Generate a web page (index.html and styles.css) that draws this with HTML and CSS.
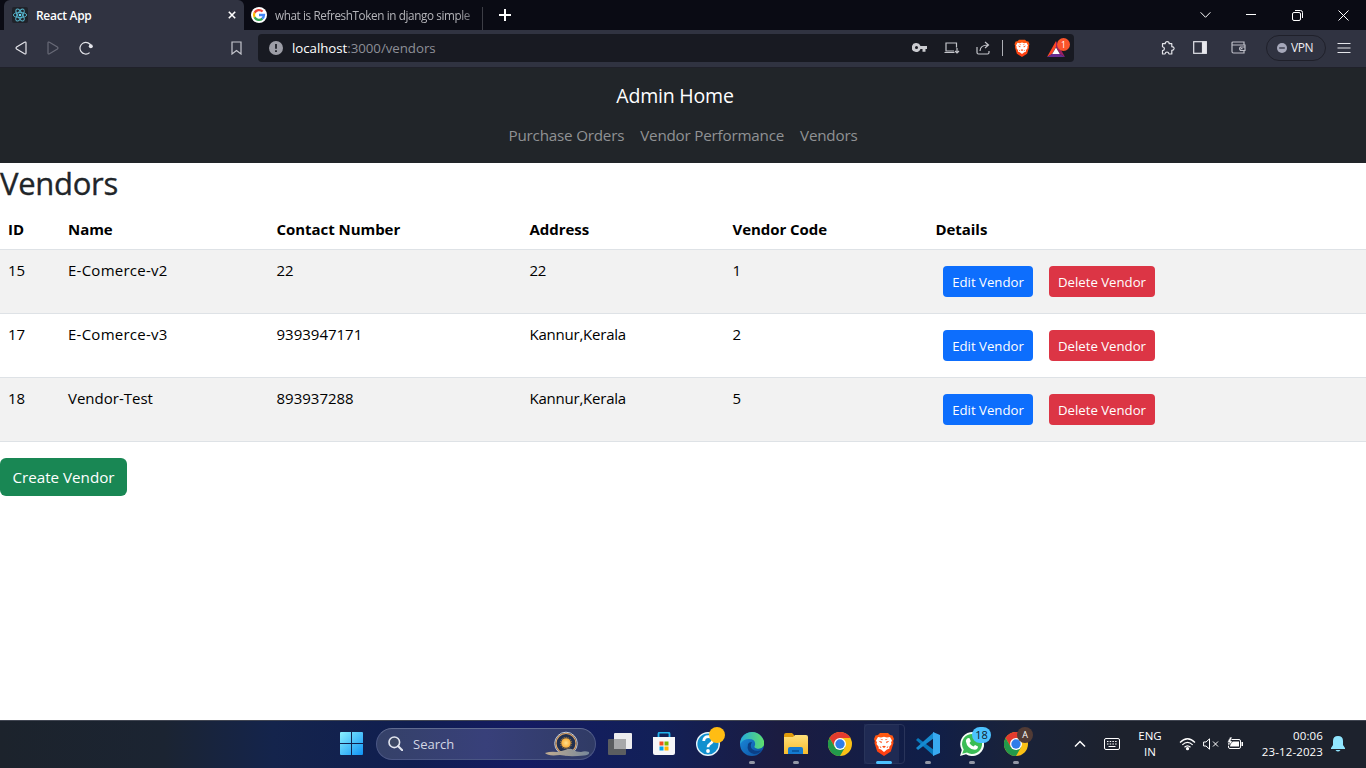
FILE: index.html
```html
<!DOCTYPE html>
<html lang="en">
<head>
<meta charset="utf-8">
<title>React App</title>
<link rel="stylesheet" href="styles.css">
</head>
<body>
<svg class="defs" width="0" height="0">
  <defs>
    <linearGradient id="win" x1="0" y1="0" x2="1" y2="1"><stop offset="0" stop-color="#8af0ff"/><stop offset="1" stop-color="#0f93f5"/></linearGradient>
    <linearGradient id="edgeA" x1="0" y1="0" x2="1" y2="0"><stop offset="0" stop-color="#25a9dc"/><stop offset="1" stop-color="#5fe06a"/></linearGradient>
    <linearGradient id="edgeB" x1="0" y1="0" x2="1" y2="1"><stop offset="0" stop-color="#1b8fe0"/><stop offset="1" stop-color="#0c4c9c"/></linearGradient>
    <linearGradient id="folder" x1="0" y1="0" x2="0" y2="1"><stop offset="0" stop-color="#ffe07a"/><stop offset="1" stop-color="#f8bc2c"/></linearGradient>
    <linearGradient id="lion" x1="0" y1="0" x2="0" y2="1"><stop offset="0" stop-color="#ff5a10"/><stop offset="1" stop-color="#ff3c12"/></linearGradient>
    <linearGradient id="sand" x1="0" y1="0" x2="1" y2="0"><stop offset="0" stop-color="#c2ad91"/><stop offset="1" stop-color="#77889a"/></linearGradient>
    <radialGradient id="glow"><stop offset="0" stop-color="#ffe08a"/><stop offset="1" stop-color="#f9ac35"/></radialGradient>
    <symbol id="brave" viewBox="0 0 20 24">
      <path fill="url(#lion)" d="M6 1h8l2 2 2.500.4L20 7l-.8 2 .3 2-2.700 8.500L10 24l-6.800-4.500L.5 11l.3-2L0 7l1.500-3.600L4 3z"/>
      <path fill="#fff" d="M4 5l3 .5 3-.8 3 .8 3-.5 2 3.500-1 2 .5 1.500-2.300 3 .3 1.500-2.500 1-3 2.500-3-2.500-2.500-1 .3-1.500-2.300-3L3 10.500 2 8.500z"/>
      <path fill="#ff4a10" d="M4.500 8.800l3.500.9-.6 1.500zM15.500 8.800l-3.500.9.600 1.500zM8 14.600l2-.9 2 .9-2 1.300zM6 6.800l3 .7-.8.8zM14 6.800l-3 .7.8.8zM5.500 14l2 1.300-1 .8zM14.500 14l-2 1.300 1 .8z"/>
    </symbol>
    <symbol id="chrome" viewBox="0 0 24 24">
      <circle cx="12" cy="12" r="12" fill="#fbc116"/>
      <path fill="#e33b2e" d="M1.600 6A12 12 0 0 1 22.400 6H12L6.800 15z"/>
      <path fill="#229a4b" d="M1.600 6A12 12 0 0 0 12 24l5.200-9H6.800z"/>
      <circle cx="12" cy="12" r="6" fill="#fff"/><circle cx="12" cy="12" r="4.700" fill="#2f7de9"/>
    </symbol>
  </defs>
</svg>

<header class="tabs">
  <div class="tab tab-active">
    <svg class="react" width="16" height="16" viewBox="0 0 16 16"><rect width="16" height="16" rx="2" fill="#20232a"/><g fill="none" stroke="#58b8d0" stroke-width=".9"><ellipse cx="8" cy="8" rx="6.700" ry="2.600"/><ellipse cx="8" cy="8" rx="6.700" ry="2.600" transform="rotate(60 8 8)"/><ellipse cx="8" cy="8" rx="6.700" ry="2.600" transform="rotate(120 8 8)"/></g><circle cx="8" cy="8" r="1.300" fill="#61dafb"/></svg>
    <span class="tab-title">React App</span>
    <svg width="8" height="8" viewBox="0 0 8 8"><path d="M.8.8l6.400 6.400M7.200.8L.8 7.200" stroke="#fff" stroke-width="1.600"/></svg>
  </div>
  <div class="tab tab-idle">
    <svg width="16" height="16" viewBox="0 0 16 16"><circle cx="8" cy="8" r="8" fill="#fff"/><g fill="none" stroke-width="2.300"><path stroke="#ea4335" d="M3.600 5.800A5 5 0 0 1 11.600 4.500"/><path stroke="#fbbc05" d="M3.700 10.400A5 5 0 0 1 3.600 5.600"/><path stroke="#34a853" d="M11.400 11.600A5 5 0 0 1 3.600 10.200"/><path stroke="#4285f4" d="M8 8h5A5 5 0 0 1 11.200 11.700"/></g></svg>
    <span class="tab-title">what is RefreshToken in django simple</span>
  </div>
  <svg class="newtab" width="12" height="12" viewBox="0 0 12 12"><path d="M6 0v12M0 6h12" stroke="#fff" stroke-width="2"/></svg>
  <div class="window-controls">
    <span><svg width="11" height="8" viewBox="0 0 11 8"><path d="M.6 1.300l4.900 5 4.900-5"/></svg></span>
    <span><svg width="10" height="10" viewBox="0 0 10 10"><path d="M0 4.500h10"/></svg></span>
    <span><svg width="11" height="11" viewBox="0 0 11 11"><rect x=".5" y="2.500" width="8" height="8" rx="1.500"/><path d="M3 .5h5.500a2 2 0 0 1 2 2V8"/></svg></span>
    <span><svg width="11" height="11" viewBox="0 0 11 11"><path d="M.5.5l10 10M10.500.5l-10 10"/></svg></span>
  </div>
</header>

<div class="toolbar">
  <div class="nav-icons">
    <svg width="12" height="14" viewBox="0 0 12 14"><path d="M9.500 1.200Q11 .6 11 2v10q0 1.400-1.500.8L1.600 8Q.5 7 1.600 6z"/></svg>
    <svg class="dim" width="12" height="14" viewBox="0 0 12 14"><path d="M2.500 1.200Q1 .6 1 2v10q0 1.400 1.500.8L10.400 8Q11.500 7 10.400 6z"/></svg>
    <svg width="14" height="14" viewBox="0 0 14 14"><path d="M10.600 11.600A5.800 5.800 0 1 1 12.300 5.400"/><circle class="solid" cx="11.800" cy="5.200" r="2" fill="#e4e5ea"/></svg>
  </div>
  <svg class="bookmark" width="11" height="14" viewBox="0 0 11 14"><path d="M1 1h9v12l-4.500-3.500L1 13z"/></svg>
  <div class="address">
    <svg class="info" width="14" height="14" viewBox="0 0 14 14"><circle class="solid" cx="7" cy="7" r="7" fill="#9c9da6"/><path d="M7 3v4.700M7 9.200V11" stroke="#181a22" stroke-width="1.700"/></svg>
    <span class="url"><b>localhost</b>:3000/vendors</span>
    <svg class="key" width="15" height="9" viewBox="0 0 15 9"><path fill="#cacbd0" fill-rule="evenodd" d="M4.500 0a4.500 4.500 0 1 0 4 6H10.500v2.700h3V6H15V3H8.500A4.500 4.500 0 0 0 4.500 0zm0 3a1.500 1.500 0 1 1 0 3 1.500 1.500 0 0 1 0-3z"/></svg>
    <svg class="install" width="16" height="12" viewBox="0 0 16 12"><path d="M12.500 5.500V1H2v8h8M.5 10.500h10M13 6v5M11 9l2 2 2-2"/></svg>
    <svg class="share" width="14" height="14" viewBox="0 0 14 14"><path d="M1 6v5.500Q1 13 2.500 13h9q1.500 0 1.500-1.500V10M4 10q.2-6 8-6M9 1l3.500 3L9 7"/></svg>
    <i class="bar"></i>
    <svg class="shield" width="16" height="18"><use href="#brave"/></svg>
    <div class="rewards"><svg width="18" height="16" viewBox="0 0 18 16"><path fill="#ff4724" d="M9 0L0 16l5-3 4-7z"/><path fill="#9e1f63" d="M9 0l9 16-5-3-4-7z"/><path fill="#662d91" d="M0 16h18l-5-3H5z"/><path fill="#fff" d="M9 6.500l3.800 6.500H5.200z"/></svg><em>1</em></div>
  </div>
  <svg class="puzzle" width="15" height="14" viewBox="0 0 15 14"><path d="M2.500 2.700h2.700a2 2 0 0 1 4 0h2.600v3q2.700.2 2.200 2.200-.5 1.600-2.200 1.500V13H9q-.4-2-2-2t-2 2H2.500V9.700q1.900-.4 1.900-2t-1.900-2z" stroke-linejoin="round"/></svg>
  <svg class="side" width="14" height="13" viewBox="0 0 14 13"><rect x=".7" y=".7" width="12.600" height="11.600"/><path fill="#e9e9ee" d="M9.500 1h3.500v11H9.500z"/></svg>
  <svg class="wallet" width="15" height="13" viewBox="0 0 15 13"><path d="M13 4V1H2Q1 1 1 2v8.500Q1 12 2.500 12H13V9.500M1 4h13v5.500H9.500a2.500 2.500 0 0 1 0-3.500H14M10 7.700h1.500"/></svg>
  <div class="vpn"><svg width="10" height="10" viewBox="0 0 10 10"><circle class="solid" cx="5" cy="5" r="5" fill="#a6a8ba"/><path d="M2.200 5h5.600" stroke="#303342" stroke-width="1.300"/></svg><span>VPN</span></div>
  <svg class="menu" width="14" height="12" viewBox="0 0 14 12"><path d="M.5 1.500h13M.5 6h13M.5 10.500h13"/></svg>
</div>

<nav class="navbar">
  <a class="brand">Admin Home</a>
  <div class="links"><a>Purchase Orders</a><a>Vendor Performance</a><a>Vendors</a></div>
</nav>

<main>
  <h2>Vendors</h2>
  <table>
    <colgroup><col class="c-id"><col class="c-name"><col class="c-contact"><col class="c-address"><col class="c-code"><col></colgroup>
    <thead><tr><th>ID</th><th>Name</th><th>Contact Number</th><th>Address</th><th>Vendor Code</th><th>Details</th></tr></thead>
    <tbody>
      <tr><td>15</td><td class="name">E-Comerce-v2</td><td>22</td><td class="place">22</td><td>1</td><td><div class="actions"><button class="edit">Edit Vendor</button><button class="delete">Delete Vendor</button></div></td></tr>
      <tr><td>17</td><td class="name">E-Comerce-v3</td><td>9393947171</td><td class="place">Kannur,Kerala</td><td>2</td><td><div class="actions"><button class="edit">Edit Vendor</button><button class="delete">Delete Vendor</button></div></td></tr>
      <tr><td>18</td><td>Vendor-Test</td><td>893937288</td><td class="place">Kannur,Kerala</td><td>5</td><td><div class="actions"><button class="edit">Edit Vendor</button><button class="delete">Delete Vendor</button></div></td></tr>
    </tbody>
  </table>
  <button class="create">Create Vendor</button>
</main>

<footer class="taskbar">
  <svg class="start" width="23" height="23" viewBox="0 0 23 23"><path fill="url(#win)" d="M1 0h10v11H0V1q0-1 1-1zM12 0h10q1 0 1 1v10H12zM0 12h11v11H1q-1 0-1-1zM12 12h11v10q0 1-1 1H12z"/></svg>
  <div class="search">
    <svg width="15" height="15" viewBox="0 0 15 15"><circle cx="6.300" cy="6.300" r="5.300" fill="#3d4864" stroke="#e3e6ef" stroke-width="1.600"/><path d="M10.200 10.200l4 4" stroke="#e3e6ef" stroke-width="2" stroke-linecap="round"/></svg>
    <span>Search</span>
    <svg class="sun" width="44" height="26" viewBox="0 0 44 26"><circle cx="21" cy="12.500" r="11.300" fill="#213050" stroke="#c6d0dd"/><circle cx="21" cy="12.500" r="10" fill="none" stroke="#e0a566" stroke-width="1.200"/><circle cx="21" cy="12" r="5.600" fill="none" stroke="#c48a32" stroke-dasharray="1 1"/><circle cx="21" cy="12" r="4.800" fill="url(#glow)"/><path fill="url(#sand)" d="M0 22q6-2 12-1 5-1 8-2 5-2 8-.500 3 2.500 8 2.500 4-1.500 8 0 1 3-5 3.500-15 1.500-24-.5-12 1.500-15-2z"/></svg>
  </div>
  <div class="apps">
    <span><svg width="24" height="22" viewBox="0 0 24 22"><rect x="6" width="18" height="16" rx="1" fill="#ececee"/><rect y="6" width="18" height="16" rx="1" fill="#5b5d60"/><path fill="#a7a8aa" d="M6 6h12v10H6z"/></svg></span>
    <span><svg width="24" height="24" viewBox="0 0 24 24"><path d="M6.500 6V2q0-1.500 1.500-1.500h8q1.500 0 1.500 1.500v4" fill="none" stroke="#22b3ee" stroke-width="1.800"/><path fill="#f6f7f9" d="M1 5h22v16q0 2-2 2H3q-2 0-2-2z"/><path fill="#f25022" d="M7.500 9.500h4v4h-4z"/><path fill="#7fba00" d="M12.500 9.500h4v4h-4z"/><path fill="#00a4ef" d="M7.500 14.500h4v4h-4z"/><path fill="#ffb900" d="M12.500 14.500h4v4h-4z"/></svg></span>
    <span><svg width="24" height="24" viewBox="0 0 24 24"><circle cx="12" cy="12" r="11.300" fill="#1090cf" stroke="#e8f4fb" stroke-width="1.400"/><path d="M7.700 9q.3-4.300 4.500-4.300 4.300 0 4.300 3.800 0 2-2.500 3.400Q12 13 12 15.200" fill="none" stroke="#fff" stroke-width="2.800"/><circle cx="12" cy="19" r="1.900" fill="#fff"/></svg><i class="notice"></i></span>
    <span class="running"><svg width="24" height="24" viewBox="0 0 24 24"><circle cx="12" cy="12" r="12" fill="url(#edgeB)"/><path fill="url(#edgeA)" d="M.3 10C2-.5 15-3 21 4q5 6 2.500 10-2.500 4-7.500 2.300-2.500-1-1-3Q16 7 9 7 3 7 .3 12z"/><path fill="#0b3f86" d="M8 12q-2 8 6 10 5 0 8-4-6 2.500-10-1-2.500-3 0-7-3 0-4 2z"/></svg></span>
    <span class="running"><svg width="24" height="22" viewBox="0 0 24 22"><path fill="#e09a09" d="M0 2q0-2 2-2h6l2 2v3H0z"/><path fill="url(#folder)" d="M0 4h9l2-2h11q2 0 2 2v17H0z"/><path fill="#147bd1" d="M4 21v-5q0-2 2-2h11q2 0 2 2v5z"/><path fill="#0b5ba5" d="M8 17h7v2H8z"/></svg></span>
    <span><svg width="24" height="24"><use href="#chrome"/></svg></span>
    <span class="running current"><svg width="20" height="24"><use href="#brave"/></svg></span>
    <span class="running"><svg width="24" height="24" viewBox="0 0 24 24"><path fill="#0879bd" d="M0 8l2-2L18 18v6z"/><path fill="#168bd0" d="M0 16l2 2L18 6V0z"/><path fill="#38a9f0" d="M17 0l7 3v18l-7 3z"/></svg></span>
    <span class="running"><svg width="24" height="24" viewBox="0 0 24 24"><path fill="#f7fff8" d="M0 24l1.800-6A12 12 0 1 1 6 22.300z"/><path fill="#3bbd55" d="M2.200 21.800l1.500-4.300A10 10 0 1 1 7 20.600z"/><path fill="#fff" d="M8 6l1.600.2 1.200 3-1.300 1.700q1.500 2.700 4 3.700l1.500-1.600 3 1.500q0 3-3.200 3.300-7.600-.8-9-8.800Q6 7 8 6z"/></svg><em class="badge">18</em></span>
    <span class="running"><svg width="24" height="24"><use href="#chrome"/></svg><em class="profile">A</em></span>
  </div>
  <div class="tray">
    <svg class="up" width="12" height="8" viewBox="0 0 12 8"><path d="M1 6.500l5-5 5 5" stroke-width="1.500"/></svg>
    <svg class="keyboard" width="16" height="12" viewBox="0 0 16 12"><rect x=".5" y=".5" width="15" height="11" rx="1.500"/><path d="M3 3.500h10M3 6h10" stroke-dasharray="1.500 1.200"/><path d="M4.500 8.500h7"/></svg>
    <div class="language">ENG<br>IN</div>
    <svg class="wifi" width="17" height="14" viewBox="0 0 17 14"><path d="M1 5.500q7.500-7.500 15 0M3.300 7.900q5.200-5 10.400 0M5.500 10.200q3-2.800 6 0" stroke-width="1.200"/><circle cx="8.500" cy="11.700" r="1.600" fill="#fff" stroke="none"/></svg>
    <svg class="volume" width="16" height="12" viewBox="0 0 16 12"><path d="M.6 4H3l3.500-3.200v10.400L3 8H.6zM10 3.500l5 5M15 3.500l-5 5"/></svg>
    <svg class="battery" width="17" height="13" viewBox="0 0 17 13"><rect x="1.500" y="2.500" width="12" height="9" rx="1.500"/><path fill="#fff" d="M4 4.500h8v5H3zM14.500 5H16v4h-1.500z" stroke="none"/><path fill="#fff" stroke="#1d222d" stroke-width=".6" d="M3 0L.3 5.500h2L1.500 9 6 4H3.800L5.200 0z"/></svg>
    <div class="clock">00:06<br>23-12-2023</div>
    <svg class="bell" width="14" height="16" viewBox="0 0 14 16"><path fill="#91e6ff" stroke="none" d="M7 0q5 0 5 5v4l2 3v1H0v-1l2-3V5q0-5 5-5zM4.500 14h5q-2.500 3-5 0z"/></svg>
  </div>
</footer>
</body>
</html>
```
FILE: styles.css
```css
* { box-sizing: border-box; }
body { margin: 0; width: 1366px; height: 768px; overflow: hidden; display: flex; flex-direction: column; background: #fff; color: #212529; font-family: "Open Sans", "Noto Sans", sans-serif; }
svg { display: block; flex: none; }
.defs { position: absolute; }
em { font-style: normal; }
button { border: 0; font-family: inherit; color: #fff; white-space: nowrap; padding: 0; }
.solid { stroke: none; }

/* Browser tabs */
.tabs { height: 30px; flex: none; display: flex; align-items: center; background: #0a0b14; padding-left: 4px; font-size: 12px; white-space: nowrap; }
.tab { height: 30px; display: flex; align-items: center; }
.tab-active { width: 240px; padding: 0 8px; background: #303341; border-radius: 6px 6px 0 0; color: #fff; font-weight: 600; letter-spacing: -.3px; }
.tab-active .tab-title { margin-left: 8px; flex: 1; }
.tab-idle { width: 239px; padding-left: 7px; color: #b5b5ba; background: linear-gradient(#3d3e46, #3d3e46) right 7px / 1px 23px no-repeat; }
.tab-idle .tab-title { width: 203px; margin-left: 8px; font-size: 11.700px; letter-spacing: -.38px; -webkit-mask-image: linear-gradient(90deg, #000 90%, rgba(0,0,0,.3)); mask-image: linear-gradient(90deg, #000 90%, rgba(0,0,0,.3)); }
.newtab { margin-left: 16px; }
.window-controls { margin-left: auto; display: flex; fill: none; stroke: #fff; }
.window-controls span { width: 46px; display: flex; justify-content: center; align-items: center; }

/* Address toolbar */
.toolbar { height: 38px; flex: none; display: flex; align-items: center; padding: 0 0 2px; background: #303341; border-bottom: 1px solid #20212a; fill: none; stroke: #e4e5ea; stroke-width: 1.2; }
.nav-icons { display: flex; gap: 20px; margin-left: 15px; }
.nav-icons .dim { stroke: #686a77; }
.bookmark { margin-left: 138px; stroke: #c4c5cd; }
.address { width: 816px; height: 28px; margin-left: 16px; padding-left: 11px; border-radius: 4px; background: #181a22; display: flex; align-items: center; stroke: #c4c5cb; }
.url { width: 618px; margin-left: 9px; font-size: 13.300px; letter-spacing: -.05px; color: #8d8f97; white-space: nowrap; }
.url b { color: #fff; font-weight: 400; }
.key { margin-left: 2px; }
.key, .shield, .rewards { stroke: none; }
.install { margin-left: 17px; }
.share { margin-left: 16px; }
.bar { width: 1px; height: 16px; background: #aeb0b6; margin-left: 12px; }
.shield { margin-left: 11px; }
.rewards { position: relative; margin-left: 17px; margin-top: 2px; }
.rewards em { position: absolute; left: 10px; top: -3px; width: 13px; height: 13px; border-radius: 50%; background: #fb542b; color: #fff; font-size: 8.500px; line-height: 13px; text-align: center; }
.puzzle { margin-left: 86px; }
.side { margin-left: 18px; }
.wallet { margin-left: 24px; stroke: #bdbec7; }
.vpn { width: 60px; height: 26px; margin-left: 20px; border: 1px solid #1f202a; border-radius: 13px; display: flex; align-items: center; padding-left: 10px; color: #eeeef2; font-size: 12px; }
.vpn span { margin-left: 4px; letter-spacing: -.4px; }
.menu { margin-left: 11px; }

/* Page navigation */
.navbar { height: 95px; flex: none; background: #212529; display: flex; flex-direction: column; align-items: center; padding-top: 13px; white-space: nowrap; }
.brand { margin-right: 16px; color: #fff; font-size: 19.500px; letter-spacing: -.2px; line-height: 30px; }
.links { display: flex; gap: 16px; margin-top: 12px; color: #909294; font-size: 15.200px; letter-spacing: -.2px; line-height: 24px; }

/* Vendor list */
main { flex: 1; }
h2 { margin: 0 0 7px; padding-top: 1px; font-size: 31px; letter-spacing: -.3px; line-height: 38.400px; font-weight: 500; -webkit-text-stroke: .35px #212529; }
table { width: 1366px; table-layout: fixed; border-collapse: collapse; color: #000; font-size: 15px; line-height: 24px; white-space: nowrap; }
.c-id { width: 60px; }
.c-name { width: 208.500px; }
.c-contact { width: 253px; }
.c-address, .c-code { width: 203px; }
th, td { padding: 8px; text-align: left; vertical-align: top; border-bottom: 1px solid #dee2e6; }
th { font-weight: 700; font-size: 15px; letter-spacing: -.05px; }
.name { letter-spacing: .25px; }
.place { letter-spacing: -.22px; }
tbody tr:nth-child(odd) { background: #f2f2f2; }
.actions { display: flex; gap: 16px; padding: 8px 7.500px; }
.edit, .delete { height: 31px; border-radius: 4px; font-size: 13.200px; }
.edit { width: 90px; background: #0d6efd; }
.delete { width: 106px; background: #dc3545; }
.create { display: block; width: 127px; height: 38px; margin-top: 16px; border-radius: 6px; background: #198754; font-size: 15.200px; }

/* Desktop taskbar */
.taskbar { height: 48px; flex: none; display: flex; align-items: center; padding-bottom: 2px; color: #fff; border-top: 1px solid #414652; background: linear-gradient(90deg, #1c232c 0, #1b2432 12%, #14244c 20%, #101e50 30%, #141b62 38%, #122058 48%, #1b1c41 57%, #101e48 68%, #19223a 74%, #1d222d 82%, #1d222d); }
.start { margin-left: 340px; }
.search { width: 220px; height: 32px; margin-left: 13px; padding: 0 6px 0 11px; border: 1px solid #4b5684; border-top-color: #606b90; border-radius: 16px; background: linear-gradient(90deg, #354168, #38407a 50%, #303b65); display: flex; align-items: center; font-size: 13px; color: #d3d7e4; }
.search span { margin-left: 10px; flex: 1; }
.apps { display: flex; margin-left: 2px; }
.apps span { position: relative; width: 44px; height: 40px; display: flex; align-items: center; justify-content: center; }
.running::after { content: ""; position: absolute; left: 19px; bottom: 0; width: 6px; height: 3px; border-radius: 2px; background: #9297a5; }
.current { background: linear-gradient(#1f2a53, #1f2a53) 2px 0 / 35px 40px no-repeat; }
.current::before { content: ""; position: absolute; inset: 0 1px 0 2px; border: 1px solid #29345a; border-radius: 4px; }
.apps .current::after { left: 14px; width: 16px; background: #4cc2ff; }
.current svg { position: relative; }
.notice { position: absolute; left: 23px; top: 3px; width: 16px; height: 16px; border-radius: 50%; background: #ffbd13; }
.badge { position: absolute; left: 22px; top: 3px; width: 19px; height: 16px; border-radius: 8px; background: #4cc2ff; color: #101c2b; font-size: 11px; line-height: 16px; text-align: center; }
.profile { position: absolute; left: 23px; top: 3px; width: 16px; height: 16px; border-radius: 50%; background: #513b35; color: #fff; font-size: 9px; line-height: 16px; text-align: center; }
.tray { display: flex; align-items: center; margin-left: 36px; font-size: 11.500px; line-height: 16px; fill: none; stroke: #fff; }
.keyboard { margin-left: 18px; }
.language { width: 28px; margin-left: 16px; text-align: center; }
.wifi { margin-left: 15px; }
.volume { margin-left: 7px; }
.battery { margin-left: 8px; }
.clock { width: 67px; margin-left: 12px; text-align: right; white-space: nowrap; letter-spacing: .12px; }
.bell { margin-left: 8px; }
```
